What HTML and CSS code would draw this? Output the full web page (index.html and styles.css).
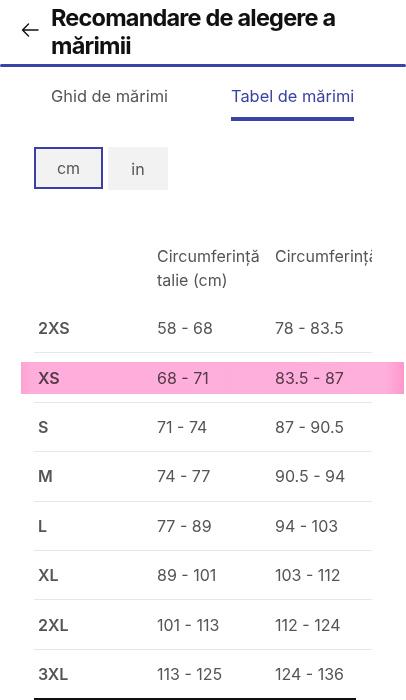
FILE: index.html
```html
<!DOCTYPE html>
<html lang="ro">
<head>
<meta charset="utf-8">
<title>Recomandare de alegere a mărimii</title>
<link rel="stylesheet" href="styles.css">
</head>
<body>
<header class="topbar">
  <button class="back" aria-label="Înapoi">
    <svg width="18" height="14" viewBox="0 0 18 14" fill="none" stroke="#111" stroke-width="1.4" stroke-linecap="round" stroke-linejoin="round">
      <path d="M17 7H1.5M7.5 1L1.5 7l6 6"/>
    </svg>
  </button>
  <h1 class="title">Recomandare de alegere a mărimii</h1>
</header>
<div class="rule"></div>
<nav class="tabs">
  <div class="tab">Ghid de mărimi</div>
  <div class="tab active">Tabel de mărimi</div>
</nav>
<div class="units">
  <div class="unit selected">cm</div>
  <div class="unit">in</div>
</div>
<section class="table-wrap">
  <div class="table-scroll">
    <div class="grid">
      <div class="row head">
        <div class="cell"></div>
        <div class="cell">Circumferință talie (cm)</div>
        <div class="cell">Circumferință bust (cm)</div>
      </div>
      <div class="row"><div class="cell size">2XS</div><div class="cell">58 - 68</div><div class="cell">78 - 83.5</div></div>
      <div class="row"><div class="cell size">XS</div><div class="cell">68 - 71</div><div class="cell">83.5 - 87</div></div>
      <div class="row"><div class="cell size">S</div><div class="cell">71 - 74</div><div class="cell">87 - 90.5</div></div>
      <div class="row"><div class="cell size">M</div><div class="cell">74 - 77</div><div class="cell">90.5 - 94</div></div>
      <div class="row"><div class="cell size">L</div><div class="cell">77 - 89</div><div class="cell">94 - 103</div></div>
      <div class="row"><div class="cell size">XL</div><div class="cell">89 - 101</div><div class="cell">103 - 112</div></div>
      <div class="row"><div class="cell size">2XL</div><div class="cell">101 - 113</div><div class="cell">112 - 124</div></div>
      <div class="row"><div class="cell size">3XL</div><div class="cell">113 - 125</div><div class="cell">124 - 136</div></div>
    </div>
  </div>
  <div class="highlight"></div>
  <div class="scrollbar"></div>
</section>
</body>
</html>
```
FILE: styles.css
```css
* { box-sizing: border-box; }
html, body { margin: 0; padding: 0; background: #fff; }
body {
  width: 406px;
  height: 700px;
  overflow: hidden;
  font-family: Inter, "Noto Sans", "Liberation Sans", sans-serif;
  color: #555;
}
.topbar {
  display: flex;
  align-items: flex-start;
  padding: 4px 0 0 0;
  height: 64px;
}
.back {
  border: 0;
  background: none;
  padding: 0;
  margin: 19px 0 0 21px;
  width: 18px;
  height: 14px;
  display: flex;
}
.title {
  margin: 0 0 0 12px;
  font-size: 23.5px;
  line-height: 28px;
  font-weight: 700;
  letter-spacing: -0.8px;
  color: #111;
  width: 325px;
}
.rule {
  height: 3px;
  background: #3a43a6;
  border-radius: 2px;
}
.tabs {
  display: flex;
  gap: 63px;
  padding-left: 51px;
}
.tab {
  font-size: 16.4px;
  line-height: 20px;
  padding: 19px 0 11px;
  border-bottom: 4px solid transparent;
  color: #555;
}
.tab.active {
  color: #3a42a0;
  border-bottom-color: #3a43a6;
  border-radius: 4px 4px 0 0;
}
.units {
  display: flex;
  gap: 5px;
  margin: 26px 0 0 34px;
}
.unit {
  width: 60px;
  height: 43px;
  background: #f2f2f2;
  display: flex;
  align-items: center;
  justify-content: center;
  font-size: 16px;
  color: #555;
}
.unit.selected {
  width: 69px;
  height: 42px;
  border: 2px solid #3b3fa4;
}
.table-wrap {
  position: relative;
  margin: 54px 0 0 34px;
  width: 338px;
}
.table-scroll {
  overflow: hidden;
  width: 338px;
}
.grid {
  width: 460px;
}
.row {
  display: grid;
  grid-template-columns: 123px 118px 219px;
  align-items: center;
  height: 49.4px;
  border-top: 1px solid #e6e8e8;
  font-size: 16px;
  line-height: 24px;
}
.row.head {
  height: auto;
  border-top: 0;
  padding-bottom: 12px;
  align-items: start;
}
.row.head + .row { border-top: 0; height: 48.4px; }
.row.head .cell { padding-right: 4px; }
.cell { color: #555; white-space: nowrap; }
.row.head .cell { white-space: normal; }
.cell.size {
  padding-left: 4px;
  font-weight: 600;
}
.highlight {
  position: absolute;
  left: -13px;
  top: 118px;
  width: 383px;
  height: 32px;
  background: linear-gradient(90deg, #ffa2d2 0, #ffaedb 3%, #ffafdb 95%, #ff99cd 100%);
  mix-blend-mode: multiply;
}
.scrollbar {
  width: 322px;
  height: 2px;
  background: #111;
}
```
